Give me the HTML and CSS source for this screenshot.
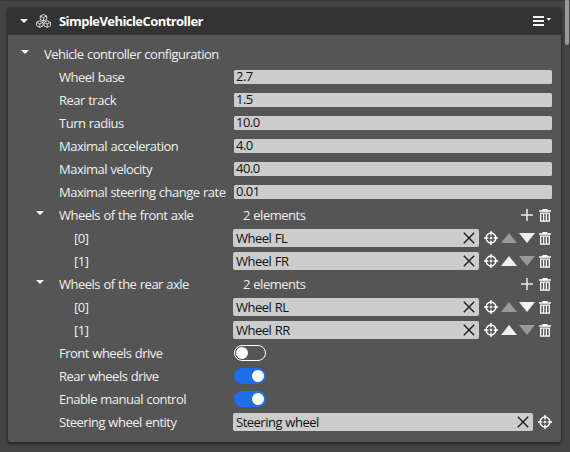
FILE: index.html
```html
<!DOCTYPE html>
<html lang="en">
<head>
<meta charset="utf-8">
<title>SimpleVehicleController</title>
<link rel="stylesheet" href="styles.css">
</head>
<body>
<svg class="defs" width="0" height="0">
  <symbol id="caret" viewBox="0 0 8 4"><path d="M0 0h8L4 4z" fill="#fff"/></symbol>
  <symbol id="cross" viewBox="0 0 12 12"><path d="M.8.8l10.4 10.4M11.2.8L.8 11.2" stroke="#1c1c1c" stroke-width="1.35" fill="none"/></symbol>
  <symbol id="target" viewBox="0 0 14 14"><circle cx="7" cy="7" r="4.9" fill="none" stroke="#fff" stroke-width="1.5"/><path d="M7 0v4M7 10v4M0 7h4M10 7h4" stroke="#fff" stroke-width="1.4"/><path d="M7 4v6M4 7h6" stroke="#fff" stroke-opacity=".45" stroke-width="1"/><circle cx="7" cy="7" r="1" fill="#fff"/></symbol>
  <symbol id="up" viewBox="0 0 16 10"><path d="M8 0l8 10H0z" fill="currentColor"/></symbol>
  <symbol id="down" viewBox="0 0 16 10"><path d="M0 0h16L8 10z" fill="currentColor"/></symbol>
  <symbol id="plus" viewBox="0 0 12 12"><path d="M6 0v12M0 6h12" stroke="#ececec" stroke-width="1.5"/></symbol>
  <symbol id="trash" viewBox="0 0 12 13"><path d="M0 2h12M3.5.6h5" stroke="#fff" stroke-width="1.3"/><path d="M1.7 4.2h8.6v8H1.7zM4.6 5v7M7.4 5v7" fill="none" stroke="#fff" stroke-width="1.3"/></symbol>
</svg>
<div class="panel">
  <header class="head">
    <svg class="caret head-caret"><use href="#caret"/></svg>
    <svg class="cubes" viewBox="0 0 15 14"><g fill="none" stroke="#e8e8e8" stroke-width=".9" stroke-linejoin="round"><path id="cube" d="M7.5.5l3.2 1.5v3.5L7.5 7.1 4.3 5.5V2zM4.3 2l3.2 1.6L10.7 2M7.5 3.6v3.5"/><use href="#cube" x="-3.7" y="6.3"/><use href="#cube" x="3.7" y="6.3"/></g></svg>
    <h1>SimpleVehicleController</h1>
    <svg class="menu" viewBox="0 0 18 10"><path d="M0 1h11M0 5h11M0 9h11" stroke="#f2f2f2" stroke-width="1.8"/><path d="M13.5 2h4.5l-2.2 2.7z" fill="#fff"/></svg>
  </header>
  <main>
    <div class="row group"><svg class="caret"><use href="#caret"/></svg><span class="label">Vehicle controller configuration</span></div>
    <div class="row"><span class="label">Wheel base</span><div class="input">2.7</div></div>
    <div class="row"><span class="label">Rear track</span><div class="input">1.5</div></div>
    <div class="row"><span class="label">Turn radius</span><div class="input">10.0</div></div>
    <div class="row"><span class="label">Maximal acceleration</span><div class="input">4.0</div></div>
    <div class="row"><span class="label">Maximal velocity</span><div class="input">40.0</div></div>
    <div class="row"><span class="label">Maximal steering change rate</span><div class="input">0.01</div></div>

    <div class="row list"><svg class="caret"><use href="#caret"/></svg><span class="label">Wheels of the front axle</span><span class="count">2 elements</span><svg class="plus"><use href="#plus"/></svg><svg class="trash"><use href="#trash"/></svg></div>
    <div class="row item"><span class="label">[0]</span><div class="ref">Wheel FL<svg class="cross"><use href="#cross"/></svg></div><svg class="target"><use href="#target"/></svg><svg class="arrow off"><use href="#up"/></svg><svg class="arrow"><use href="#down"/></svg><svg class="trash"><use href="#trash"/></svg></div>
    <div class="row item"><span class="label">[1]</span><div class="ref">Wheel FR<svg class="cross"><use href="#cross"/></svg></div><svg class="target"><use href="#target"/></svg><svg class="arrow"><use href="#up"/></svg><svg class="arrow off"><use href="#down"/></svg><svg class="trash"><use href="#trash"/></svg></div>

    <div class="row list"><svg class="caret"><use href="#caret"/></svg><span class="label">Wheels of the rear axle</span><span class="count">2 elements</span><svg class="plus"><use href="#plus"/></svg><svg class="trash"><use href="#trash"/></svg></div>
    <div class="row item"><span class="label">[0]</span><div class="ref">Wheel RL<svg class="cross"><use href="#cross"/></svg></div><svg class="target"><use href="#target"/></svg><svg class="arrow off"><use href="#up"/></svg><svg class="arrow"><use href="#down"/></svg><svg class="trash"><use href="#trash"/></svg></div>
    <div class="row item"><span class="label">[1]</span><div class="ref">Wheel RR<svg class="cross"><use href="#cross"/></svg></div><svg class="target"><use href="#target"/></svg><svg class="arrow"><use href="#up"/></svg><svg class="arrow off"><use href="#down"/></svg><svg class="trash"><use href="#trash"/></svg></div>

    <div class="row"><span class="label">Front wheels drive</span><div class="toggle"></div></div>
    <div class="row"><span class="label">Rear wheels drive</span><div class="toggle on"></div></div>
    <div class="row"><span class="label">Enable manual control</span><div class="toggle on"></div></div>
    <div class="row"><span class="label">Steering wheel entity</span><div class="ref">Steering wheel<svg class="cross"><use href="#cross"/></svg></div><svg class="target"><use href="#target"/></svg></div>
  </main>
</div>
<div class="scrollbar"></div>
</body>
</html>
```

FILE: styles.css
```css
* { box-sizing: border-box; }
body {
  margin: 0;
  height: 452px;
  padding: 7px 9px 0 8px;
  overflow: hidden;
  background: #444;
  border-top: 1px solid #393939;
  color: #f0f0f0;
  font: 13px/18px "Open Sans", "Noto Sans", sans-serif;
  letter-spacing: -.5px;
  word-spacing: .5px;
}
svg { display: block; flex: none; }
.defs { position: absolute; }
.panel {
  height: 434px;
  background: #555;
  border-radius: 3px;
  box-shadow: 0 1px 3px 1px rgba(0, 0, 0, .4);
  overflow: hidden;
}
.head {
  display: flex;
  align-items: center;
  height: 27px;
  padding: 0 10px 0 12px;
  background: #333;
}
.head h1 { margin: 0 auto 1px 8px; font-size: 13px; line-height: 18px; font-weight: 700; letter-spacing: -.56px; color: #fff; }
.caret { width: 8px; height: 4px; }
.head .caret { margin: 0 8px 1px 0; }
.cubes { width: 15px; height: 14px; margin-bottom: 1px; }
.menu { width: 18px; height: 10px; margin-bottom: 1px; }
main { padding: 8px 9px 0 0; }
.row { display: flex; align-items: center; height: 23px; padding: 0 0 1px 51px; }
.row .caret { margin: 0 15px 4px 0; }
.label { flex: none; width: 174px; white-space: nowrap; }
.group { padding-left: 13px; }
.list { padding-left: 28px; }
.list .label { width: 184px; }
.item { padding-left: 66px; }
.item .label { width: 159px; }
.input {
  flex: 1;
  height: 14px;
  margin-left: 1px;
  padding-left: 2px;
  border-radius: 1.5px;
  background: #ccc;
  color: #111;
  line-height: 13px;
}
.ref {
  display: flex;
  flex: 1;
  align-items: center;
  justify-content: space-between;
  height: 18px;
  padding: 0 4px 0 3px;
  border-radius: 2px;
  background: #ccc;
  color: #111;
  line-height: 17px;
}
.cross { width: 12px; height: 12px; }
.target { width: 14px; height: 14px; margin-left: 5px; }
.plus { width: 12px; height: 12px; margin: 0 6px 0 auto; }
.trash { width: 12px; height: 13px; margin: 1px 1px 0 0; }
.arrow { width: 16px; height: 10px; margin-left: 2px; }
.target + .arrow { margin-left: 3px; }
.arrow + .trash { margin-left: 4px; }
.off { color: #999; }
.toggle {
  width: 32px;
  height: 16px;
  margin-left: 1px;
  padding: 1px;
  border: 1px solid #fff;
  border-radius: 8px;
}
.toggle::before { content: ""; display: block; width: 12px; height: 12px; border-radius: 50%; background: #fff; }
.toggle.on { padding-left: 17px; background: #1f6feb; border-color: #1f6feb; }
.scrollbar {
  position: absolute;
  top: 0;
  right: 1px;
  width: 4px;
  height: 45px;
  border-radius: 0 0 2px 2px;
  background: #999;
}
```
